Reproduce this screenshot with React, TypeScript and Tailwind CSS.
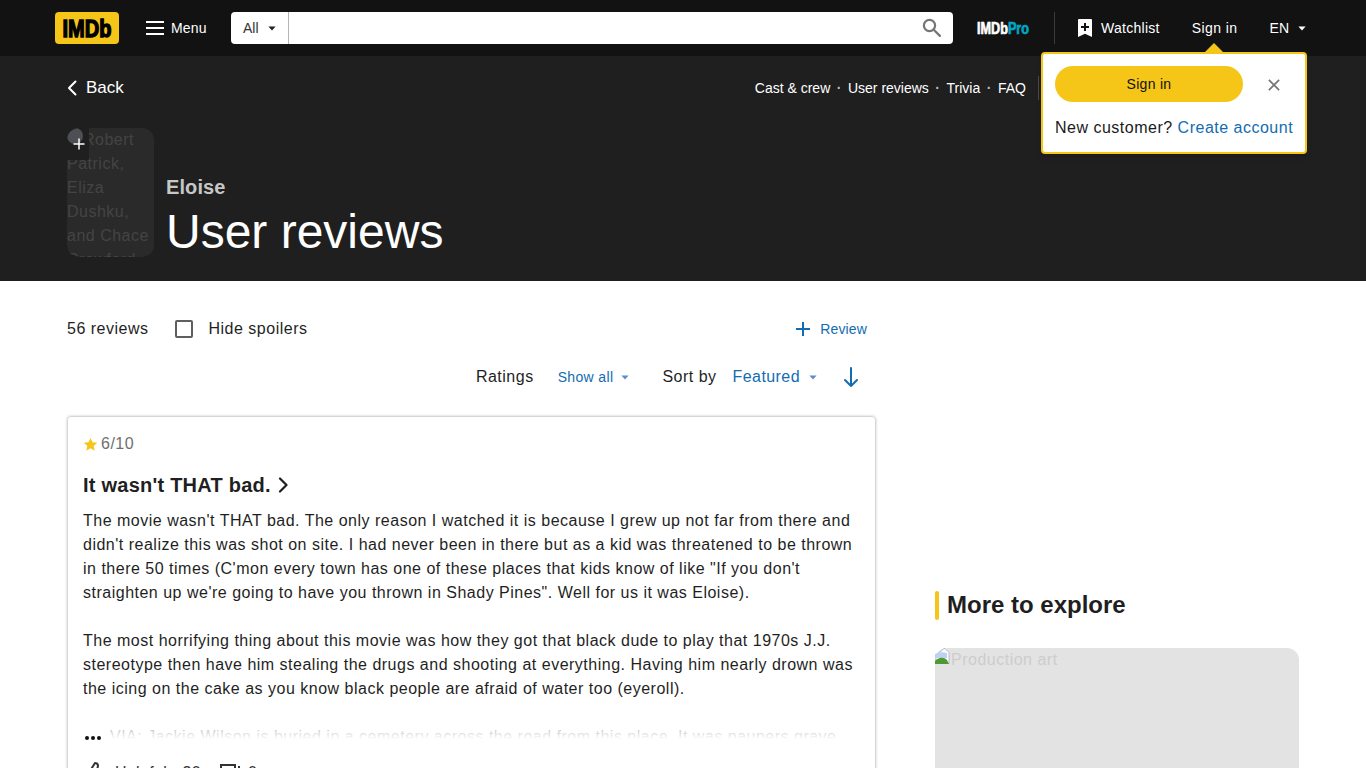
import React from "react";

const font = { fontFamily: '"Liberation Sans", Arial, sans-serif' };

function Caret({ className }: { className: string }) {
  return (
    <svg viewBox="0 0 8 5" className={className} fill="currentColor">
      <path d="M0.4 0.6h7.2L4 4.6z" strokeLinejoin="round" />
    </svg>
  );
}

function Header() {
  return (
    <header className="flex h-14 items-center bg-[#121212] pl-[55px] text-sm text-white">
      <svg viewBox="0 0 64 32" className="h-8 w-16 shrink-0">
        <rect width="64" height="32" rx="4" fill="#f5c518" />
        <text x="7.500" y="24.500" fontFamily="Liberation Sans" fontWeight="700" fontSize="23" textLength="49" lengthAdjust="spacingAndGlyphs" stroke="#000" strokeWidth="1.300" fill="#000">IMDb</text>
      </svg>
      <div className="ml-[27px] flex w-[85px] shrink-0 items-center">
        <svg viewBox="0 0 18 14" className="h-[14px] w-[18px]" fill="#fff">
          <rect y="0" width="18" height="2" />
          <rect y="6" width="18" height="2" />
          <rect y="12" width="18" height="2" />
        </svg>
        <span className="ml-[7px] tracking-[.01em]">Menu</span>
      </div>
      <div className="flex h-8 w-[722px] shrink-0 items-center rounded bg-white text-[#333]">
        <div className="flex h-8 w-[58px] shrink-0 items-center border-r border-[#b5b5b5] pl-3">
          <span>All</span>
          <Caret className="ml-[9px] h-[5px] w-2 text-[#222]" />
        </div>
        <div className="flex-1" />
        <svg viewBox="0 0 24 24" className="mr-[9px] h-6 w-6" fill="none" stroke="#757575" strokeWidth="2.200">
          <circle cx="9.500" cy="9.500" r="5.600" />
          <path d="M13.500 13.500l6.400 6.400" strokeLinecap="round" />
        </svg>
      </div>
      <svg viewBox="0 0 54 16" className="ml-6 h-4 w-[54px] shrink-0 overflow-visible">
        <text x="0" y="14" fontFamily="Liberation Sans" fontWeight="700" fontSize="16" textLength="52" lengthAdjust="spacingAndGlyphs" strokeWidth=".7">
          <tspan fill="#fff" stroke="#fff">IMDb</tspan>
          <tspan fill="#00a7c4" stroke="#00a7c4">Pro</tspan>
        </text>
      </svg>
      <div className="ml-[23px] h-8 w-px shrink-0 bg-[#3a3a3a]" />
      <svg viewBox="0 0 14 18" className="ml-[23px] h-[18px] w-[14px] shrink-0">
        <path d="M0 1a1 1 0 0 1 1-1h12a1 1 0 0 1 1 1v17l-7-3.200L0 18z" fill="#fff" />
        <path d="M6 4h2v3h3v2H8v3H6V9H3V7h3z" fill="#121212" />
      </svg>
      <span className="ml-[9px] tracking-[.02em]">Watchlist</span>
      <span className="ml-8 tracking-[.03em]">Sign in</span>
      <span className="ml-8">EN</span>
      <Caret className="ml-[9px] h-[5px] w-2 text-white" />
    </header>
  );
}

function Hero() {
  return (
    <section className="h-[225px] bg-[#1f1f1f] pl-[67px] text-white">
      <div className="flex h-16 items-center">
        <svg viewBox="0 0 10 16" className="h-4 w-[10px]" fill="none" stroke="#fff" strokeWidth="2" strokeLinecap="round" strokeLinejoin="round">
          <path d="M8.500 1.500L2 8l6.500 6.500" />
        </svg>
        <span className="ml-[9px] text-[17px]">Back</span>
        <nav className="ml-[631px] flex items-center text-sm">
          <span>Cast &amp; crew</span>
          <span className="mx-[6.5px] font-bold text-[#bbb]">·</span>
          <span>User reviews</span>
          <span className="mx-[6.5px] font-bold text-[#bbb]">·</span>
          <span>Trivia</span>
          <span className="mx-[6.5px] font-bold text-[#bbb]">·</span>
          <span>FAQ</span>
          <span className="ml-[12px] h-6 w-px bg-[#4a4a4a]" />
        </nav>
      </div>
      <div className="mt-2 flex">
        <div className="relative h-[129px] w-[87px] overflow-hidden rounded-xl bg-[#2a2a2a] text-base leading-6 tracking-[.03125em] text-[#444]">
          <p>
            <span className="inline-block h-4 w-4" />
            Robert Patrick, Eliza Dushku, and Chace Crawford
          </p>
          <div className="absolute left-0 top-0 flex h-[32px] w-[22px] items-center justify-center rounded-tl-xl bg-[#1f1f1f]">
            <div className="absolute left-0 top-0 h-[16px] w-[16px] rounded-full bg-[#4d4f55]" />
            <svg viewBox="0 0 12 12" className="relative ml-[2px] h-3 w-3" stroke="#fff" strokeWidth="1.500">
              <path d="M6 .5v11M.5 6h11" />
            </svg>
          </div>
        </div>
        <div className="ml-3 pt-[47px]">
          <div className="text-xl font-bold leading-6 tracking-[.005em] text-[#c7c7c7]">Eloise</div>
          <h1 className="mt-[5px] text-5xl font-normal leading-[56px]">User reviews</h1>
        </div>
      </div>
    </section>
  );
}

function SignInPopup() {
  return (
    <div className="absolute left-[1041px] top-[52px] h-[102px] w-[266px] rounded-sm border-2 border-[#f5c518] bg-white px-3 pt-3 text-[#1a1a1a] shadow-md">
      <div className="absolute -top-[11px] left-[161px] h-0 w-0 border-x-[10px] border-b-[10px] border-x-transparent border-b-[#f5c518]" />
      <div className="flex items-center">
        <div className="flex h-9 w-[188px] items-center justify-center rounded-full bg-[#f5c518] text-sm tracking-[.02em] text-[#111]">Sign in</div>
        <svg viewBox="0 0 14 14" className="ml-[25px] mt-[2px] h-[12px] w-[12px]" stroke="#757575" strokeWidth="2" fill="none">
          <path d="M1 1l12 12M13 1L1 13" />
        </svg>
      </div>
      <p className="mt-[14px] whitespace-nowrap text-base leading-6 tracking-[.03125em]">
        New customer? <span className="text-[#136cb2]">Create account</span>
      </p>
    </div>
  );
}

function Review() {
  return (
    <article className="relative mt-[27px] h-[400px] rounded border border-[#d6d6d6] px-[15px] pt-[15px] shadow-[0_0_3px_rgba(0,0,0,.2)]">
      <div className="flex h-6 items-center text-base tracking-[.03125em] text-[#6f6f6f]">
        <svg viewBox="0 0 24 24" className="h-[15px] w-[15px] text-[#f5c518]" fill="currentColor">
          <path d="M12 1.500l3.200 7 7.600.8-5.700 5.100 1.600 7.600L12 18.100 5.300 22l1.600-7.600L1.200 9.300l7.600-.8z" />
        </svg>
        <span className="ml-[3px]">6/10</span>
      </div>
      <h3 className="mt-[17px] flex h-6 items-center text-xl font-bold tracking-[.012em] text-[#1f1f1f]">
        It wasn't THAT bad.
        <svg viewBox="0 0 10 16" className="ml-[7px] h-4 w-[10px]" fill="none" stroke="#1f1f1f" strokeWidth="2.200" strokeLinecap="round" strokeLinejoin="round">
          <path d="M2 1.500L8.500 8 2 14.500" />
        </svg>
      </h3>
      <div className="mt-3 text-base leading-6 tracking-[.03125em] text-[#1f1f1f]">
        <p>The movie wasn't THAT bad. The only reason I watched it is because I grew up not far from there and didn't realize this was shot on site. I had never been in there but as a kid was threatened to be thrown in there 50 times (C'mon every town has one of these places that kids know of like "If you don't straighten up we're going to have you thrown in Shady Pines". Well for us it was Eloise).</p>
        <p className="mt-6">The most horrifying thing about this movie was how they got that black dude to play that 1970s J.J. stereotype then have him stealing the drugs and shooting at everything. Having him nearly drown was the icing on the cake as you know black people are afraid of water too (eyeroll).</p>
        <div className="relative mt-6 h-6 overflow-hidden whitespace-nowrap pl-[27px] text-[#1f1f1f]">
          VIA: Jackie Wilson is buried in a cemetery across the road from this place. It was paupers grave
          <div className="absolute inset-0 bg-gradient-to-b from-white/65 to-white to-60%" />
          <div className="absolute left-[2px] top-[11px] flex gap-[2px]">
            <i className="h-1 w-1 rounded-full bg-[#111]" />
            <i className="h-1 w-1 rounded-full bg-[#111]" />
            <i className="h-1 w-1 rounded-full bg-[#111]" />
          </div>
        </div>
      </div>
      <div className="mt-[12px] flex h-6 items-center text-base tracking-[.02em] text-[#333]">
        <svg viewBox="0 0 24 24" className="h-6 w-6" fill="none" stroke="#333" strokeWidth="2" strokeLinejoin="round">
          <path d="M7 10v11M3 10h4v11H3zM7 10l5-8c1.800 0 3 1.300 3 3l-1 4h6c1.300 0 2 1 1.700 2.300l-2 8c-.3 1-1 1.700-2 1.700H7" />
        </svg>
        <span className="ml-2">Helpful • 30</span>
        <svg viewBox="0 0 24 24" className="ml-[17px] h-6 w-6" fill="none" stroke="#333" strokeWidth="2">
          <path d="M3 4h14v12H3z" />
          <path d="M21 5v14" />
        </svg>
        <span className="ml-[6px]">0</span>
      </div>
    </article>
  );
}

function Left() {
  return (
    <div className="w-[809px] shrink-0">
      <div className="flex h-6 items-center text-base tracking-[.03125em] text-[#1f1f1f]">
        <span>56 reviews</span>
        <span className="ml-[27px] h-[18px] w-[18px] rounded-[2px] border-2 border-[#5f5f5f]" />
        <span className="ml-[15px]">Hide spoilers</span>
        <svg viewBox="0 0 16 16" className="ml-auto h-4 w-4" stroke="#136cb2" strokeWidth="2">
          <path d="M8 1v14M1 8h14" />
        </svg>
        <span className="ml-[9px] mr-[9px] text-sm tracking-[.01em] text-[#136cb2]">Review</span>
      </div>
      <div className="mt-6 flex h-6 items-center justify-end pr-[17px] text-base tracking-[.03125em] text-[#1f1f1f]">
        <span>Ratings</span>
        <span className="ml-6 text-sm tracking-[.025em] text-[#136cb2]">Show all</span>
        <Caret className="ml-2 h-[5px] w-2 text-[#5b8ec9]" />
        <span className="ml-[33px]">Sort by</span>
        <span className="ml-4 tracking-[.0265em] text-[#136cb2]">Featured</span>
        <Caret className="ml-[9px] h-[5px] w-2 text-[#5b8ec9]" />
        <svg viewBox="0 0 16 22" className="ml-[26px] h-[22px] w-4" fill="none" stroke="#136cb2" strokeWidth="2" strokeLinecap="round" strokeLinejoin="round">
          <path d="M8 2v18M2 14l6 6 6-6" />
        </svg>
      </div>
      <Review />
    </div>
  );
}

function Right() {
  return (
    <aside className="ml-[59px] w-[364px] shrink-0 pt-[274px]">
      <div className="flex h-[29px] items-center">
        <div className="h-[29px] w-1 rounded bg-[#f5c518]" />
        <h2 className="mb-[2px] ml-2 text-2xl font-bold text-[#1f1f1f]">More to explore</h2>
      </div>
      <div className="mt-7 h-[200px] rounded-t-xl bg-[#e3e3e3]">
        <div className="flex h-6 items-start text-base leading-6 tracking-[.03125em] text-[#cdcdcd]">
          <svg viewBox="0 0 16 16" className="h-4 w-4 shrink-0">
            <path d="M9 0.500h1l4 4v11H1l0-8z" fill="#fff" stroke="#a9a9c4" strokeWidth=".8" />
            <path d="M0 6c4-2 8-2 12-1v5H0z" fill="#bcd2ee" />
            <path d="M0 16v-3c4-4 9-4 12-1l2 4z" fill="#4d9a35" />
          </svg>
          <span>Production art</span>
        </div>
      </div>
    </aside>
  );
}

export default function App() {
  return (
    <div style={font} className="relative h-[768px] w-[1366px] overflow-hidden bg-white">
      <Header />
      <Hero />
      <main className="flex pl-[67px] pt-9">
        <Left />
        <Right />
      </main>
      <SignInPopup />
    </div>
  );
}
